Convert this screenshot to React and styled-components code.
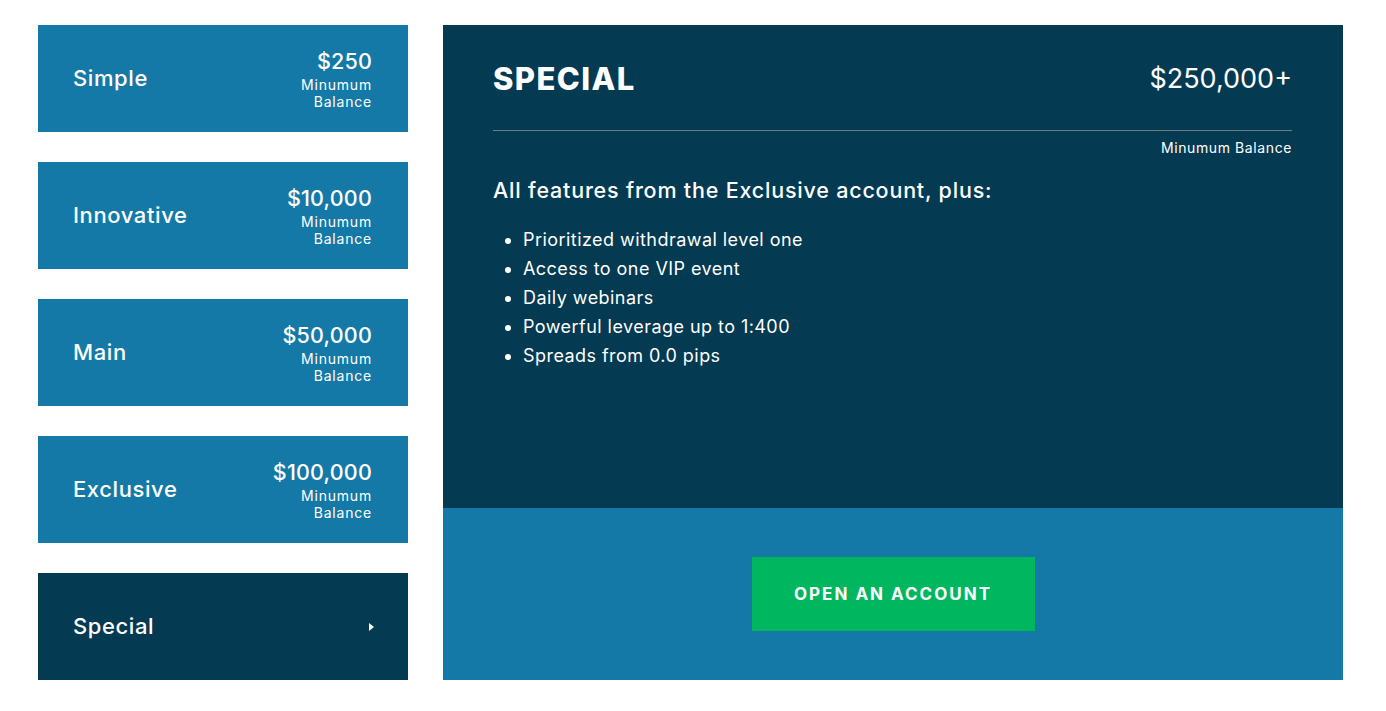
import React, { useState } from 'react'
import styled, { createGlobalStyle } from 'styled-components'

const GlobalStyle = createGlobalStyle`
  html, body {
    margin: 0;
    padding: 0;
    background: #fff;
    font-family: Inter, "Open Sans", sans-serif;
  }
`

const Page = styled.div`
  display: flex;
  gap: 35px;
  padding: 25px 38px 31px 38px;
  align-items: stretch;
`

const Tabs = styled.div`
  width: 370px;
  display: flex;
  flex-direction: column;
  gap: 30px;
  flex-shrink: 0;
`

const Tab = styled.div`
  height: 107px;
  box-sizing: border-box;
  padding: 0 36px 0 35px;
  display: flex;
  align-items: center;
  justify-content: space-between;
  background: ${({ $active }) => ($active ? '#043a52' : '#1479a6')};
  color: #fff;
  cursor: pointer;
`

const TabName = styled.div`
  font-size: 22px;
  font-weight: 500;
  letter-spacing: 0.6px;
  margin-top: -2px;
`

const TabPrice = styled.div`
  text-align: right;
  width: 110px;
`

const Amount = styled.div`
  font-size: 21.5px;
  line-height: 26px;
  font-weight: 500;
  letter-spacing: 0.2px;
`

const Caption = styled.div`
  font-size: 14px;
  line-height: 17px;
  letter-spacing: 0.8px;
  margin-top: 2px;
`

const Arrow = styled.span`
  width: 0;
  height: 0;
  border-top: 4px solid transparent;
  border-bottom: 4px solid transparent;
  border-left: 5px solid #fff;
  margin-right: -2px;
`

const Panel = styled.div`
  width: 900px;
  display: flex;
  flex-direction: column;
  flex-shrink: 0;
`

const Body = styled.div`
  background: #043a52;
  color: #fff;
  height: 483px;
  box-sizing: border-box;
  padding: 34px 51px 0 50px;
`

const Header = styled.div`
  display: flex;
  justify-content: space-between;
  align-items: center;
  height: 38px;
  padding-bottom: 33px;
  border-bottom: 1px solid #6d7d85;
`

const Title = styled.h2`
  margin: 0;
  font-size: 31px;
  font-weight: 800;
  letter-spacing: 1.4px;
`

const BigPrice = styled.div`
  font-size: 27px;
  font-weight: 400;
`

const MinNote = styled.div`
  text-align: right;
  font-size: 14px;
  letter-spacing: 0.6px;
  margin-top: 8px;
`

const Lead = styled.div`
  font-size: 21.5px;
  font-weight: 500;
  letter-spacing: 0.8px;
  margin-top: 21px;
`

const Features = styled.ul`
  margin: 22px 0 0 0;
  padding-left: 30px;
  font-size: 18px;
  line-height: 29px;
  letter-spacing: 0.45px;
`

const Footer = styled.div`
  background: #1479a6;
  height: 172px;
  display: flex;
  justify-content: center;
  padding-top: 49px;
  box-sizing: border-box;
`

const CTA = styled.button`
  width: 283px;
  height: 74px;
  border: none;
  background: #00b65e;
  color: #fff;
  font-family: inherit;
  font-size: 17px;
  font-weight: 700;
  letter-spacing: 2px;
  cursor: pointer;
`

const plans = [
  { name: 'Simple', price: '$250' },
  { name: 'Innovative', price: '$10,000' },
  { name: 'Main', price: '$50,000' },
  { name: 'Exclusive', price: '$100,000' },
  { name: 'Special', price: '$250,000+' },
]

const features = [
  'Prioritized withdrawal level one',
  'Access to one VIP event',
  'Daily webinars',
  'Powerful leverage up to 1:400',
  'Spreads from 0.0 pips',
]

export default function App() {
  const [active, setActive] = useState(4)
  return (
    <>
      <GlobalStyle />
      <Page>
        <Tabs>
          {plans.map((p, i) => (
            <Tab key={p.name} $active={i === active} onClick={() => setActive(i)}>
              <TabName>{p.name}</TabName>
              {i === active ? (
                <Arrow />
              ) : (
                <TabPrice>
                  <Amount>{p.price}</Amount>
                  <Caption>Minumum Balance</Caption>
                </TabPrice>
              )}
            </Tab>
          ))}
        </Tabs>
        <Panel>
          <Body>
            <Header>
              <Title>SPECIAL</Title>
              <BigPrice>$250,000+</BigPrice>
            </Header>
            <MinNote>Minumum Balance</MinNote>
            <Lead>All features from the Exclusive account, plus:</Lead>
            <Features>
              {features.map((f) => (
                <li key={f}>{f}</li>
              ))}
            </Features>
          </Body>
          <Footer>
            <CTA>OPEN AN ACCOUNT</CTA>
          </Footer>
        </Panel>
      </Page>
    </>
  )
}
